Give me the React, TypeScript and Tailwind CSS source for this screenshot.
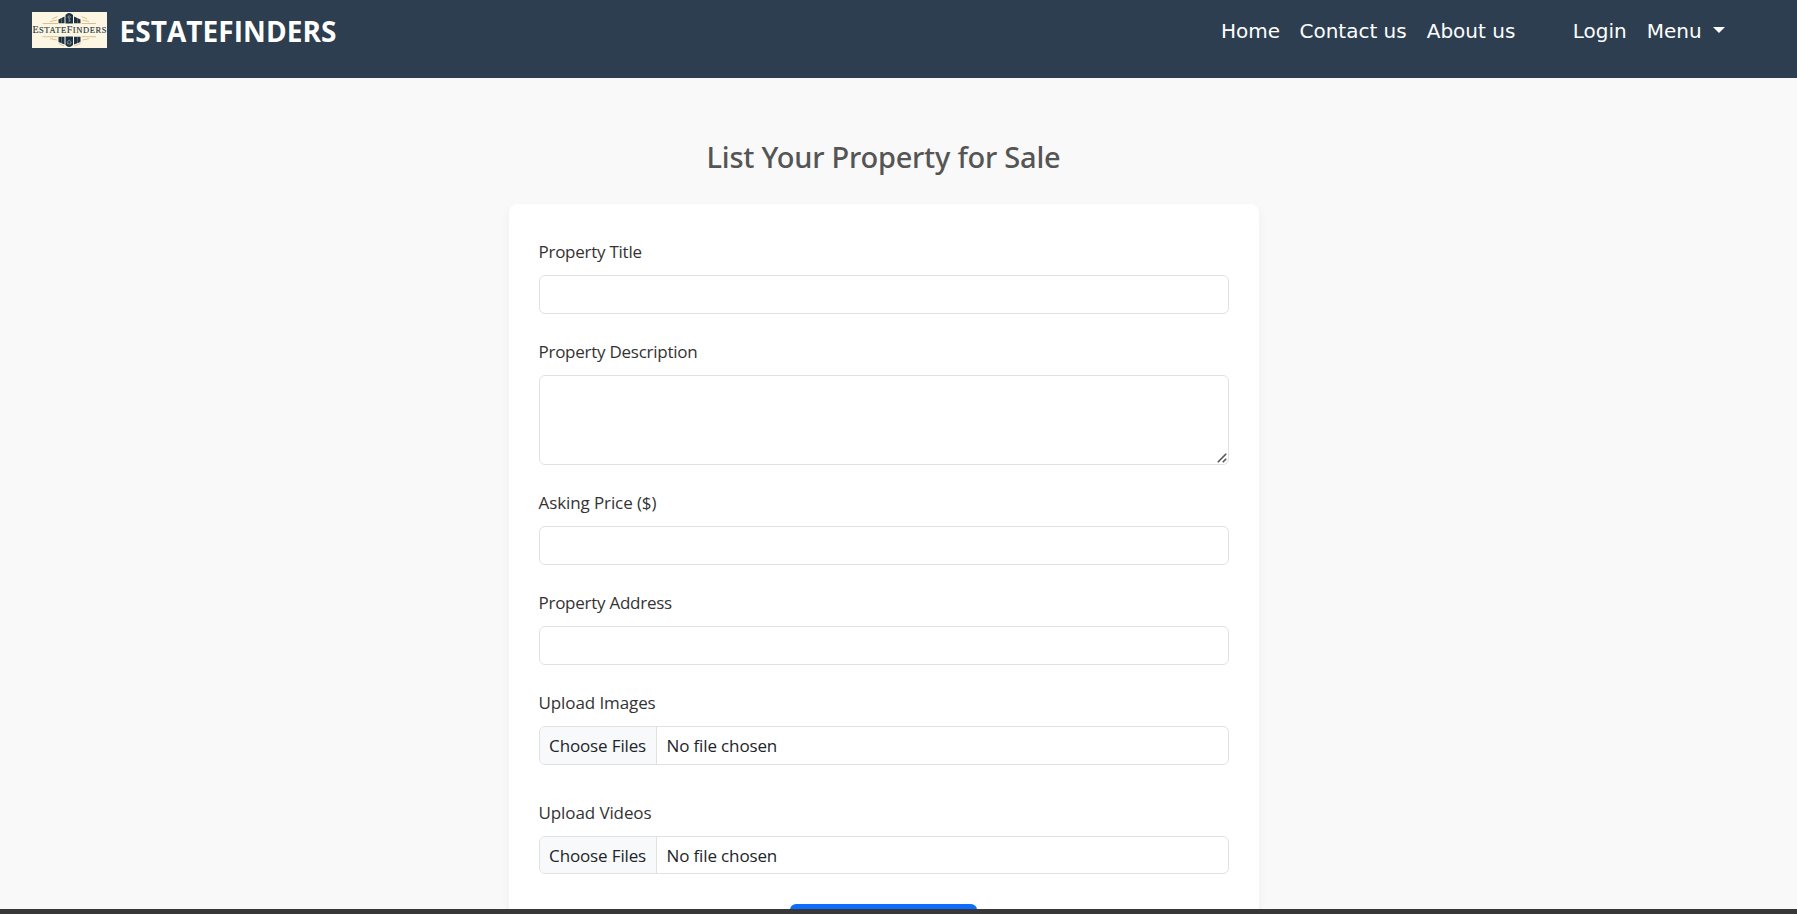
import type { ReactNode } from "react";

function Logo() {
  return (
    <svg width="75" height="36" viewBox="0 0 75 36" className="block shrink-0" aria-label="EstateFinders">
      <rect width="75" height="36" fill="#fdf6e3" />
      <g fill="#1d3145">
        <path d="M33.5 3Q37 -.8 41 3V11.5H33.5Z" />
        <path d="M26.500 7.500L32.5 4.5V11.3H26.500Z" />
        <path d="M42 4.5L48.5 7.5V11.3H42Z" />
        <path d="M33.5 24.5H41V33Q37 36.8 33.5 33Z" />
        <path d="M26.5 24.7H32.5V32.5L26.5 30Z" />
        <path d="M42 24.7H48.5V30L42 32.5Z" />
      </g>
      <g fill="none" stroke="#d3b27a" strokeWidth=".8">
        <path d="M10.500 11.500H26M49.500 11.500H64M18 9.500L25 8.200M50.500 8.200L57 9.500M20 7L25.500 4.500M49.500 4.500L55 7" />
        <path d="M10.500 24.700H26M49.500 24.700H64M18 26.700L25 28M50.500 28L57 26.700M26.500 31.500L32 34M42.500 34L48.500 31.500" />
        <path d="M29.500 6.300V11M45.500 6.300V11M29.500 25V31M45.500 25V31" strokeWidth=".5" opacity=".7" />
      </g>
      <g fill="none" stroke="#b9c0bd" strokeWidth=".6">
        <circle cx="37.200" cy="5" r="1.200" />
        <path d="M37.200 6.200V10M37.200 8.500H38.500" />
        <path d="M35 30.200L37.200 28L39.500 30.200M35.800 30V32H38.700V30" />
      </g>
      <text x=".4" y="20.800" textLength="74" lengthAdjust="spacing" fontFamily="'Liberation Serif', serif" fontSize="10" fill="#2b3944" stroke="#2b3944" strokeWidth=".15">
        E<tspan fontSize="8.500">STATE</tspan>F<tspan fontSize="8.500">INDERS</tspan>
      </text>
    </svg>
  );
}

function Field({ label, wide, children }: { label: string; wide?: boolean; children: ReactNode }) {
  return (
    <label className="flex flex-col">
      <span className={"mb-[10px] h-[27px] pt-px text-[17px] leading-[26px] text-[#333333] " + (wide ? "tracking-[-0.1px]" : "tracking-[-0.26px]")}>
        {label}
      </span>
      {children}
    </label>
  );
}

const control = "block w-full rounded-md border border-[#dee2e6] bg-white outline-none";

function FilePicker({ short }: { short?: boolean }) {
  return (
    <div className={"flex w-full overflow-hidden rounded-md border border-[#dee2e6] bg-white text-[17px] tracking-[-0.14px] text-[#212529] " + (short ? "h-[38px] leading-[37px]" : "h-[39px] leading-[37px]")}>
      <div className="w-[117px] shrink-0 whitespace-nowrap border-r border-[#dee2e6] bg-[#f8f9fa] pl-[9.6px]">Choose Files</div>
      <div className="whitespace-nowrap pl-[10px]">No file chosen</div>
    </div>
  );
}

export default function App() {
  return (
    <div className="flex h-[914px] flex-col overflow-hidden bg-[#f9f9f9] font-['Open_Sans',sans-serif]">
      <header className="flex h-[78px] shrink-0 items-start justify-between bg-[#2d3e50] pl-8 text-white">
        <div className="flex h-[60px] items-center">
          <Logo />
          <span className="pl-[12.5px] pt-px text-[28px] font-bold leading-[40px] tracking-[0.05px]">ESTATEFINDERS</span>
        </div>
        <nav className="flex h-[62px] items-center pr-[72px] font-['DejaVu_Sans',sans-serif] text-xl leading-[30px]">
          <a className="mr-[19.5px]">Home</a>
          <a className="mr-5">Contact us</a>
          <a className="mr-[57.5px]">About us</a>
          <a className="mr-5">Login</a>
          <a className="flex items-center">
            Menu
            <svg width="12" height="6" viewBox="0 0 12 6" className="-mt-0.5 ml-[11.3px]" fill="currentColor">
              <path d="M0 0H12L6 6Z" />
            </svg>
          </a>
        </nav>
      </header>

      <main className="flex h-[831px] shrink-0 flex-col items-center overflow-hidden pr-[30px]">
        <h2 className="mt-[59px] h-10 shrink-0 whitespace-nowrap font-['Noto_Sans',sans-serif] text-[29px] font-medium leading-10 tracking-[-0.23px] text-[#555555]">
          List Your Property for Sale
        </h2>
        <form className="mt-[27px] flex h-[780px] w-[750px] shrink-0 flex-col rounded-lg bg-white px-[30px] pt-[34px] shadow-[0_4px_10px_rgba(0,0,0,0.05)]">
          <div className="flex flex-col gap-6">
            <Field label="Property Title">
              <input type="text" className={control + " h-[39px]"} />
            </Field>
            <Field label="Property Description">
              <span className="relative block">
                <textarea className={control + " h-[90px] resize-none"} />
                <svg width="10" height="10" viewBox="0 0 10 10" className="absolute bottom-[2px] right-[2px]" fill="none" stroke="#555" strokeWidth="1.6">
                  <path d="M.8 9.200L9.200 .8M5.800 9.200L9.200 5.800" />
                </svg>
              </span>
            </Field>
            <Field label="Asking Price ($)" wide>
              <input type="text" className={control + " h-[39px]"} />
            </Field>
            <Field label="Property Address">
              <input type="text" className={control + " h-[39px]"} />
            </Field>
            <Field label="Upload Images" wide>
              <FilePicker />
            </Field>
          </div>
          <div className="mt-[34px]">
            <Field label="Upload Videos" wide>
              <FilePicker short />
            </Field>
          </div>
          <button type="button" aria-label="Submit" className="mt-[30px] h-10 w-[187px] self-center rounded-md bg-[#0d6efd]" />
        </form>
      </main>
      <footer className="h-[5px] shrink-0 bg-[#383838]" />
    </div>
  );
}
